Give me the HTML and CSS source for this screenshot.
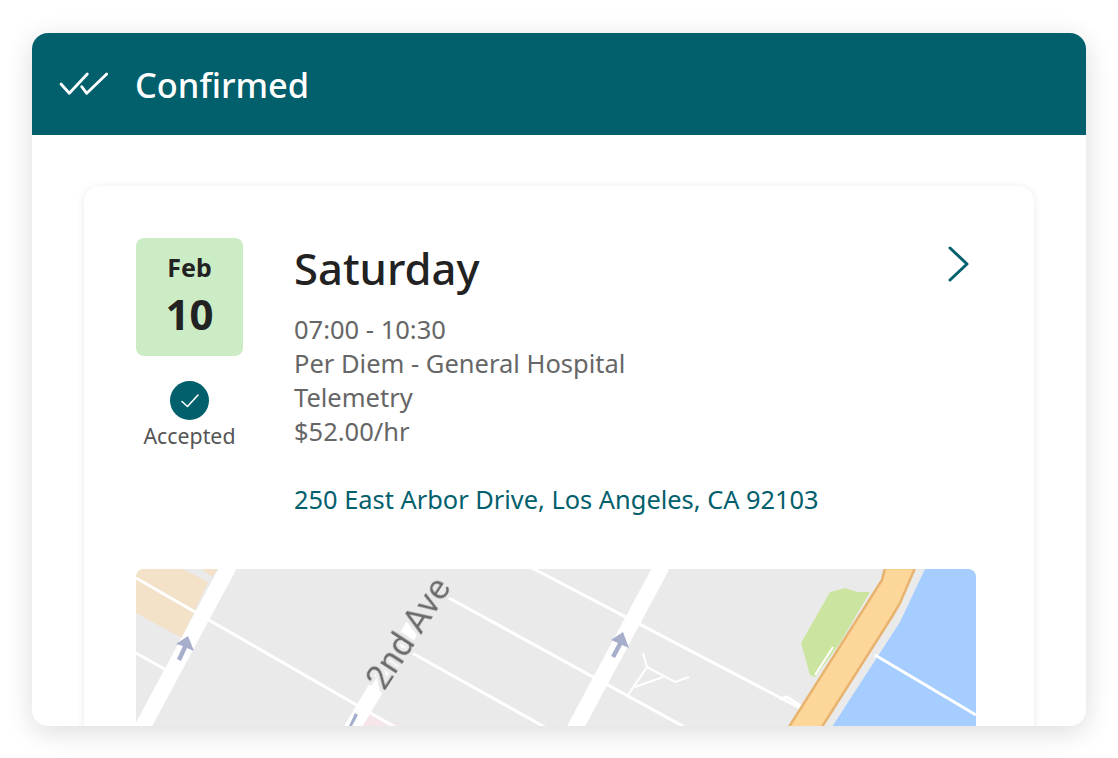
FILE: index.html
```html
<!DOCTYPE html>
<html lang="en">
<head>
    <meta charset="UTF-8">
    <meta name="viewport" content="width=device-width, initial-scale=1.0">
    <title>Confirmed Shift</title>
    <link rel="stylesheet" href="styles.css">
</head>
<body>
    <div class="panel">
        <div class="panel-header">
            <svg class="double-check" width="50" height="24" viewBox="0 0 50 24" fill="none" stroke="#fff" stroke-width="2.8" stroke-linecap="round" stroke-linejoin="round">
                <path d="M2 12 L10.300 21.300 L28.300 2"/>
                <path d="M22.700 14.700 L27.700 21.300 L47.700 2"/>
            </svg>
            <span class="panel-title">Confirmed</span>
        </div>

        <div class="shift-card">
            <div class="shift-top">
                <div class="date-col">
                    <div class="date-box">
                        <span class="date-month">Feb</span>
                        <span class="date-day">10</span>
                    </div>
                    <div class="status-dot">
                        <svg width="20" height="16" viewBox="0 0 20 16" fill="none" stroke="#fff" stroke-width="1.600" stroke-linecap="round" stroke-linejoin="round">
                            <path d="M2 8.500 L7.500 13.500 L18 2"/>
                        </svg>
                    </div>
                    <span class="status-label">Accepted</span>
                </div>

                <div class="shift-details">
                    <h1 class="shift-day">Saturday</h1>
                    <p class="shift-line">07:00 - 10:30</p>
                    <p class="shift-line">Per Diem - General Hospital</p>
                    <p class="shift-line">Telemetry</p>
                    <p class="shift-line">$52.00/hr</p>
                    <a class="shift-address" href="#">250 East Arbor Drive, Los Angeles, CA 92103</a>
                </div>

                <svg class="chevron" width="22" height="36" viewBox="0 0 22 36" fill="none" stroke="#02606d" stroke-width="3" stroke-linecap="round" stroke-linejoin="round">
                    <path d="M2 2 L19 18 L2 34"/>
                </svg>
            </div>

            <!-- map drawn in screenshot coordinates -->
            <svg class="map" width="840" height="157" viewBox="136 569 840 157">
                <defs>
                    <filter id="soft"><feGaussianBlur stdDeviation="0.5"/></filter>
                </defs>
                <rect x="136" y="569" width="840" height="157" fill="#eaeaea"/>
                <g filter="url(#soft)">
                    <path d="M136 569 H183 L208 582 L182 638 L136 613 Z" fill="#f3e1c8"/>
                    <path d="M202 569 H218 L212 577 Z" fill="#f3e1c8"/>
                    <path d="M358 726 L370 712 L400 726 Z" fill="#f6e6ea"/>

                    <path d="M830 592 L845 588 L857 592 L870 592 L840 643 L815 677 L810 675 L801 643 Z" fill="#cbe5a0"/>

                    <g stroke="#fff" stroke-width="3" fill="none">
                        <path d="M136 578 L400 730"/>
                        <path d="M438 592 L690 730"/>
                        <path d="M405 649 L550 730"/>
                        <path d="M532 568 L800 708"/>
                        <path d="M136 653 L168 671"/>
                        <path d="M780 699 L787 697 L802 707"/>
                    </g>
                    <g stroke="#fff" stroke-width="2" fill="none">
                        <path d="M643 653 L647 667 L628 695"/>
                        <path d="M647 667 L675 682 L689 677"/>
                        <path d="M635 687 L663 677"/>
                        <path d="M833 647 L815 675"/>
                    </g>
                    <g stroke="#fff" stroke-width="16" fill="none">
                        <path d="M229 566 L141 730"/>
                        <path d="M418 618 L351 730"/>
                        <path d="M662 566 L574 730"/>
                    </g>

                    <path d="M925 569 L900 622 L830 730 H976 V569 Z" fill="#a5cdff"/>
                    <path d="M918 569 L896 618 L824 730" stroke="#eaeaea" stroke-width="8" fill="none"/>
                    <path d="M875 655 L976 715" stroke="#fff" stroke-width="3" fill="none"/>
                    <path d="M885 568 L882 580 L787 730 H820 L893 615 L900 603 L915 568 Z" fill="#fdd699" stroke="#e8b36e" stroke-width="2.500"/>

                    <g fill="#a7aecb">
                        <path d="M188 636 L194 651 L187 648 L181 661 L177 659 L183 646 L176 644 Z"/>
                        <path d="M623 632 L629 648 L622 645 L615 658 L611 656 L618 643 L611 640 Z"/>
                        <path d="M355 713 L349 726 H341 L342 728 H356 L352 726 L358 715 Z"/>
                    </g>
                </g>
                <text class="map-label" x="384" y="692" transform="rotate(-57 384 692)" filter="url(#soft)">2nd Ave</text>
            </svg>
        </div>
    </div>
</body>
</html>
```

FILE: styles.css
```css
body {
    margin: 0;
    padding: 33px 32px 32px;
    background: #fff;
    font-family: "Noto Sans", "Open Sans", sans-serif;
}
.panel {
    height: 693px;
    background: #fff;
    border-radius: 16px;
    overflow: hidden;
    box-shadow: 0 6px 28px rgba(0,0,0,0.14);
}
.panel-header {
    display: flex;
    align-items: center;
    height: 102px;
    padding-left: 27px;
    background: #02606d;
}
.double-check {
    margin-right: 26px;
}
.panel-title {
    color: #fff;
    font-size: 34.4px;
    font-weight: 500;
}
.shift-card {
    margin: 51px 52px 0;
    padding: 52px 58px 0 52px;
    height: 600px;
    background: #fff;
    border-radius: 16px;
    box-shadow: 0 1px 8px rgba(0,0,0,0.09);
}
.shift-top {
    display: flex;
    align-items: flex-start;
}
.date-col {
    display: flex;
    flex-direction: column;
    align-items: center;
    width: 107px;
    margin-right: 51px;
}
.date-box {
    display: flex;
    flex-direction: column;
    align-items: center;
    width: 107px;
    height: 118px;
    background: #ccecc6;
    border-radius: 8px;
    color: #222;
    font-weight: 700;
}
.date-month {
    margin-top: 13px;
    font-size: 25px;
    line-height: 32px;
}
.date-day {
    margin-top: 5px;
    font-size: 42px;
    line-height: 52px;
}
.status-dot {
    display: flex;
    align-items: center;
    justify-content: center;
    width: 39px;
    height: 39px;
    margin-top: 25px;
    border-radius: 50%;
    background: #02606d;
}
.status-label {
    margin-top: 1px;
    color: #555;
    font-size: 21.3px;
    line-height: 30px;
}
.shift-details {
    flex: 1;
}
.shift-day {
    margin: 0 0 14px;
    color: #222;
    font-size: 43.6px;
    font-weight: 500;
    line-height: 60px;
}
.shift-line {
    margin: 0;
    color: #666;
    font-size: 25.5px;
    line-height: 34px;
}
.shift-address {
    display: block;
    margin-top: 34px;
    color: #02606d;
    font-size: 25.4px;
    line-height: 34px;
    text-decoration: none;
}
.chevron {
    margin: 8px 6px 0 0;
}
.map {
    display: block;
    margin-top: 53px;
    border-radius: 8px 8px 0 0;
    overflow: hidden;
}
.map-label {
    font-family: Roboto, sans-serif;
    font-size: 35px;
    fill: #6b6b6b;
    stroke: #eaeaea;
    stroke-width: 7px;
    paint-order: stroke;
}
```
